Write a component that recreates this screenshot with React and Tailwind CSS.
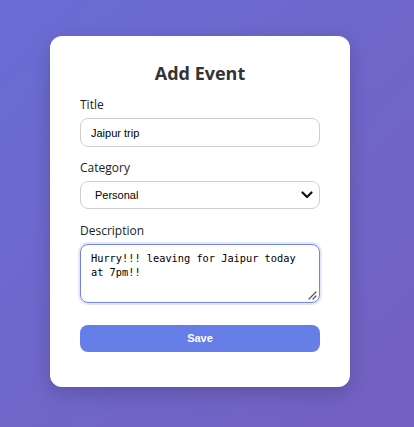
import React from "react";

export default function App() {
  return (
    <div className="w-[414px] h-[427px] bg-[linear-gradient(135deg,#6a6dd5_0%,#7460c0_100%)] flex justify-start pl-[50px] pt-[36px]" style={{ fontFamily: '"Open Sans", "Noto Sans", sans-serif' }}>
      <div className="w-[300px] h-[351px] bg-white rounded-[12px] shadow-[0_6px_20px_rgba(0,0,0,0.18)] px-[30px] pt-[26px] flex flex-col">
        <h2 className="text-[18px] leading-[22px] font-bold text-[#333] text-center mb-[12px]">Add Event</h2>

        <label className="text-[12px] leading-[18px] text-[#222] mb-[4px]">Title</label>
        <input
          readOnly
          value="Jaipur trip"
          className="h-[29px] w-full border border-[#cfcfcf] rounded-[8px] px-[10px] text-[11px] text-black outline-none"
          style={{ fontFamily: '"Liberation Sans", Arial, sans-serif', fontWeight: 500 }}
        />

        <label className="text-[12px] leading-[18px] text-[#222] mt-[12px] mb-[4px]">Category</label>
        <div className="relative h-[28px] w-full border border-[#cfcfcf] rounded-[8px] flex items-center pl-[14px]">
          <span className="text-[11px] text-black" style={{ fontFamily: '"Liberation Sans", Arial, sans-serif', fontWeight: 500 }}>Personal</span>
          <svg className="absolute right-[6px] top-[8px]" width="12" height="10" viewBox="0 0 12 10">
            <path d="M1.5 2.5 L6 7 L10.5 2.5" fill="none" stroke="#111" strokeWidth="2.2" strokeLinecap="round" strokeLinejoin="round" />
          </svg>
        </div>

        <label className="text-[12px] leading-[18px] text-[#222] mt-[13px] mb-[4px]">Description</label>
        <div className="relative">
          <textarea
            readOnly
            value={"Hurry!!! leaving for Jaipur today at 7pm!!"}
            className="block h-[59px] w-full border border-[#6f84e6] rounded-[8px] px-[10px] pt-[6px] text-[10.3px] leading-[14px] text-black outline-none resize-none shadow-[0_0_0_2px_rgba(102,126,234,0.18)]"
            style={{ fontFamily: '"DejaVu Sans Mono", "Liberation Mono", monospace' }}
          />
          <svg className="absolute right-[3px] bottom-[3px]" width="9" height="9" viewBox="0 0 9 9">
            <path d="M8 1 L1 8 M8 5 L5 8" stroke="#555" strokeWidth="1.2" strokeLinecap="round" />
          </svg>
        </div>

        <button className="mt-[22px] h-[27px] w-full rounded-[8px] bg-[#667ee8] text-white text-[11px] font-bold" style={{ fontFamily: '"Liberation Sans", Arial, sans-serif' }}>
          Save
        </button>
      </div>
    </div>
  );
}
